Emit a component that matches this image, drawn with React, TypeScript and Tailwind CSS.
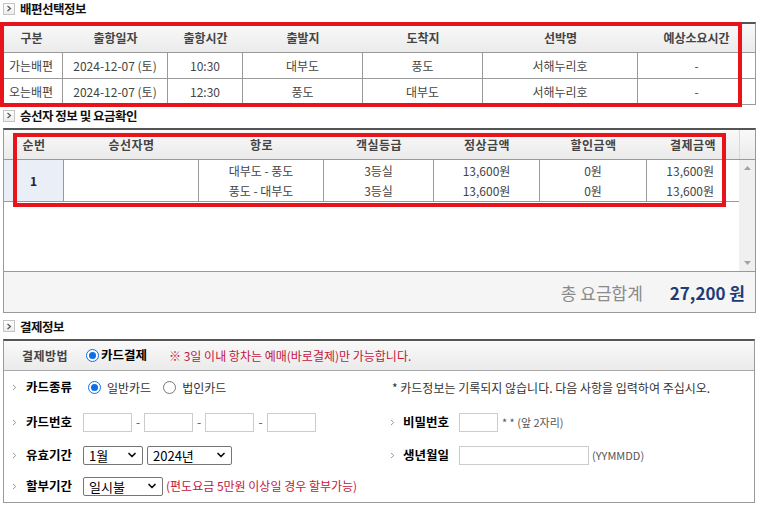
import React from "react";
import { ChevronDown } from "lucide-react";

function SectionTitle({ children, h }: { children: React.ReactNode; h: string }) {
  return (
    <div className={`flex items-center pl-[3px] ${h}`}>
      <span className="w-[12px] h-[12px] border border-[#c4c4c4] bg-gradient-to-b from-white to-[#ececec] flex items-center justify-center">
        <svg width="6" height="7" viewBox="0 0 6 7">
          <polyline points="1.5,1 4.5,3.5 1.5,6" fill="none" stroke="#555" strokeWidth="1.2" />
        </svg>
      </span>
      <span className="ml-[5px] text-[12.5px] font-bold text-[#111] tracking-[-0.5px] leading-[15px]">{children}</span>
    </div>
  );
}

function Bullet() {
  return (
    <svg width="5" height="7" viewBox="0 0 5 7">
      <polyline points="1,1 3.8,3.5 1,6" fill="none" stroke="#9a9a9a" strokeWidth="1" />
    </svg>
  );
}

function Radio({ checked }: { checked?: boolean }) {
  return checked ? (
    <span className="w-[13px] h-[13px] rounded-full border-[1.5px] border-[#0b6fe8] bg-white flex items-center justify-center shrink-0">
      <span className="block w-[7px] h-[7px] rounded-full bg-[#0b6fe8]" />
    </span>
  ) : (
    <span className="block w-[13px] h-[13px] rounded-full border border-[#767676] bg-white shrink-0" />
  );
}

function Select({ value, w }: { value: string; w: string }) {
  return (
    <div className={`${w} h-[19px] border border-[#767676] rounded-[2px] bg-white flex items-center justify-between pl-[5px] pr-[4px]`}>
      <span className="text-[13px] text-black leading-none">{value}</span>
      <ChevronDown size={12} strokeWidth={3.5} color="#111" />
    </div>
  );
}

function Input({ w }: { w: string }) {
  return <div className={`${w} h-[19px] border border-[#cccccc] bg-white`} />;
}

const t1Cols = "grid grid-cols-[63px_105px_75px_120px_120px_155px_117px]";
const t2Cols = "grid grid-cols-[60px_135px_125px_110px_106px_107px_92px]";

export default function App() {
  const rows1 = [
    ["가는배편", "2024-12-07 (토)", "10:30", "대부도", "풍도", "서해누리호", "-"],
    ["오는배편", "2024-12-07 (토)", "12:30", "풍도", "대부도", "서해누리호", "-"],
  ];
  const head1 = ["구분", "출항일자", "출항시간", "출발지", "도착지", "선박명", "예상소요시간"];
  const head2 = ["순번", "승선자명", "항로", "객실등급", "정상금액", "할인금액", "결제금액"];

  return (
    <div className="relative w-[763px] h-[508px] overflow-hidden bg-white font-['Noto_Sans_CJK_KR',sans-serif] text-[#444]">
      <SectionTitle h="h-[17px]">배편선택정보</SectionTitle>

      {/* Table 1 */}
      <div className="mt-[5px] w-[756px] border-t-2 border-[#555] border-r border-r-[#999]">
        <div className={`${t1Cols} h-[29px] bg-gradient-to-b from-[#f9f9f9] to-[#ebebeb] border-b border-[#999]`}>
          {head1.map((h) => (
            <div key={h} className="flex items-center justify-center text-[12px] font-bold text-[#444] leading-none">
              {h}
            </div>
          ))}
        </div>
        {rows1.map((r, i) => (
          <div key={i} className={`${t1Cols} h-[26px] border-b border-[#999]`}>
            {r.map((c, j) => (
              <div
                key={j}
                className={`flex items-center justify-center text-[12px] text-[#444] leading-none ${j < 6 ? "border-r border-[#999]" : ""}`}
              >
                {c}
              </div>
            ))}
          </div>
        ))}
      </div>

      <SectionTitle h="h-[21px]">승선자 정보 및 요금확인</SectionTitle>

      {/* Table 2 */}
      <div className="mt-[2px] ml-[3px] w-[753px] border-t-2 border-[#555] border-x border-b border-x-[#999] border-b-[#999]">
        <div className="flex h-[30px] bg-gradient-to-b from-[#f9f9f9] to-[#ebebeb] border-b border-[#999]">
          <div className={t2Cols}>
            {head2.map((h) => (
              <div key={h} className="flex items-center justify-center text-[12px] font-bold text-[#444] tracking-[0.5px] leading-none">
                {h}
              </div>
            ))}
          </div>
          <div className="flex-1 border-l border-[#d8d8d8]" />
        </div>
        <div className="flex h-[111px]">
          <div className="flex-1">
            <div className={`${t2Cols} h-[42px] border-b border-[#999]`}>
              <div className="flex items-center justify-center bg-[#e9eef7] border-r border-[#999] text-[12px] font-bold text-[#222]">1</div>
              <div className="border-r border-[#999]" />
              <div className="flex flex-col items-center justify-center border-r border-[#999] text-[12px] leading-[20px] text-[#444]">
                <span>대부도 - 풍도</span>
                <span>풍도 - 대부도</span>
              </div>
              <div className="flex flex-col items-center justify-center border-r border-[#999] text-[12px] leading-[20px] text-[#444]">
                <span>3등실</span>
                <span>3등실</span>
              </div>
              <div className="flex flex-col items-center justify-center border-r border-[#999] text-[12px] leading-[20px] text-[#444]">
                <span>13,600원</span>
                <span>13,600원</span>
              </div>
              <div className="flex flex-col items-center justify-center border-r border-[#999] text-[12px] leading-[20px] text-[#444]">
                <span>0원</span>
                <span>0원</span>
              </div>
              <div className="flex flex-col items-end justify-center pr-[25px] text-[12px] leading-[20px] text-[#444]">
                <span>13,600원</span>
                <span>13,600원</span>
              </div>
            </div>
          </div>
          <div className="w-[16px] bg-[#f0f0f0] flex flex-col justify-between items-center py-[6px]">
            <svg width="7" height="4" viewBox="0 0 7 4">
              <polygon points="0,4 3.5,0 7,4" fill="#a3a3a3" />
            </svg>
            <svg width="7" height="4" viewBox="0 0 7 4">
              <polygon points="0,0 3.5,4 7,0" fill="#a3a3a3" />
            </svg>
          </div>
        </div>
        <div className="h-[41px] border-t border-[#999] bg-[#f5f5f5] flex items-center justify-end pr-[10px]">
          <span className="text-[17px] text-[#8a8a8a] leading-none">총 요금합계</span>
          <span className="ml-[27px] text-[17px] font-bold text-[#1e3c78] leading-none">27,200 원</span>
        </div>
      </div>

      <SectionTitle h="h-[26px]">결제정보</SectionTitle>

      {/* Payment */}
      <div className="ml-[3px] w-[752px] border-t-2 border-[#555] border-x border-b border-x-[#999] border-b-[#999]">
        <div className="h-[30px] bg-gradient-to-b from-[#f9f9f9] to-[#ebebeb] border-b border-[#aaa] flex items-center">
          <span className="w-[82px] pl-[18px] text-[12px] font-bold text-[#444] tracking-[0.5px] leading-none">결제방법</span>
          <Radio checked />
          <span className="ml-[2px] text-[12.5px] font-bold text-black leading-none">카드결제</span>
          <span className="ml-[22px] text-[12px] text-[#c3163e] leading-none">※ 3일 이내 항차는 예매(바로결제)만 가능합니다.</span>
        </div>
        <div className="h-[131px] flex flex-col">
          {/* row 1 */}
          <div className="h-[33px] flex items-center">
            <div className="w-[384px] flex items-center">
              <span className="w-[22px] pl-[8px] flex items-center"><Bullet /></span>
              <span className="w-[57px] text-[12.5px] font-bold text-black leading-none">카드종류</span>
              <span className="ml-[5px]"><Radio checked /></span>
              <span className="ml-[6px] text-[12px] text-[#333] leading-none">일반카드</span>
              <span className="ml-[12px]"><Radio /></span>
              <span className="ml-[6px] text-[12px] text-[#333] leading-none">법인카드</span>
            </div>
            <div className="pl-[4px] text-[12px] text-[#333] leading-none">* 카드정보는 기록되지 않습니다. 다음 사항을 입력하여 주십시오.</div>
          </div>
          {/* row 2 */}
          <div className="h-[36px] flex items-center">
            <div className="w-[384px] flex items-center">
              <span className="w-[22px] pl-[8px] flex items-center"><Bullet /></span>
              <span className="w-[57px] text-[12.5px] font-bold text-black leading-none">카드번호</span>
              <Input w="w-[49px]" />
              <span className="w-[12px] text-center text-[12px] text-[#555] leading-none">-</span>
              <Input w="w-[49px]" />
              <span className="w-[12px] text-center text-[12px] text-[#555] leading-none">-</span>
              <Input w="w-[49px]" />
              <span className="w-[13px] text-center text-[12px] text-[#555] leading-none">-</span>
              <Input w="w-[49px]" />
            </div>
            <div className="flex items-center">
              <span className="w-[15px] pl-[2px] flex items-center"><Bullet /></span>
              <span className="w-[56px] text-[12.5px] font-bold text-black leading-none">비밀번호</span>
              <Input w="w-[39px]" />
              <span className="ml-[4px] text-[11px] text-[#555] leading-none">* * (앞 2자리)</span>
            </div>
          </div>
          {/* row 3 */}
          <div className="h-[30px] flex items-center">
            <div className="w-[384px] flex items-center">
              <span className="w-[22px] pl-[8px] flex items-center"><Bullet /></span>
              <span className="w-[57px] text-[12.5px] font-bold text-black leading-none">유효기간</span>
              <Select value="1월" w="w-[60px]" />
              <span className="ml-[4px]"><Select value="2024년" w="w-[85px]" /></span>
            </div>
            <div className="flex items-center">
              <span className="w-[15px] pl-[2px] flex items-center"><Bullet /></span>
              <span className="w-[56px] text-[12.5px] font-bold text-black leading-none">생년월일</span>
              <Input w="w-[130px]" />
              <span className="ml-[3px] text-[11px] text-[#555] leading-none">(YYMMDD)</span>
            </div>
          </div>
          {/* row 4 */}
          <div className="h-[32px] flex items-center">
            <span className="w-[22px] pl-[8px] flex items-center"><Bullet /></span>
            <span className="w-[57px] text-[12.5px] font-bold text-black leading-none">할부기간</span>
            <Select value="일시불" w="w-[80px]" />
            <span className="ml-[3px] text-[12px] text-[#c3163e] leading-none">(편도요금 5만원 이상일 경우 할부가능)</span>
          </div>
        </div>
      </div>

      {/* red annotation boxes */}
      <div className="absolute left-0 top-[22px] w-[742px] h-[85px] border-4 border-[#e8141c] pointer-events-none" />
      <div className="absolute left-[13px] top-[133px] w-[713px] h-[74px] border-4 border-[#e8141c] pointer-events-none" />
    </div>
  );
}
